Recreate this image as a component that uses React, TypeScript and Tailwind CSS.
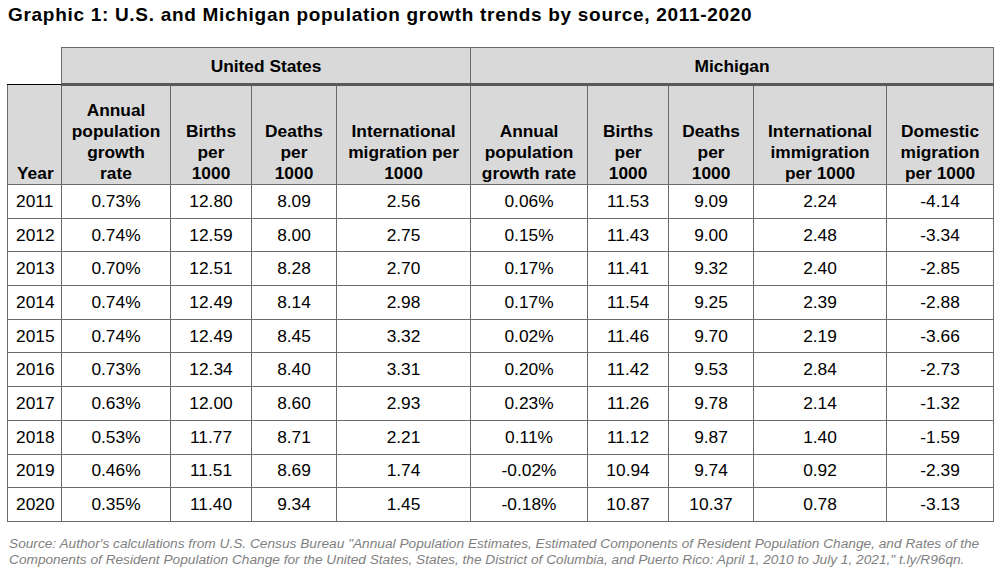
import React from "react";

const rows: string[][] = [
  ["2011", "0.73%", "12.80", "8.09", "2.56", "0.06%", "11.53", "9.09", "2.24", "-4.14"],
  ["2012", "0.74%", "12.59", "8.00", "2.75", "0.15%", "11.43", "9.00", "2.48", "-3.34"],
  ["2013", "0.70%", "12.51", "8.28", "2.70", "0.17%", "11.41", "9.32", "2.40", "-2.85"],
  ["2014", "0.74%", "12.49", "8.14", "2.98", "0.17%", "11.54", "9.25", "2.39", "-2.88"],
  ["2015", "0.74%", "12.49", "8.45", "3.32", "0.02%", "11.46", "9.70", "2.19", "-3.66"],
  ["2016", "0.73%", "12.34", "8.40", "3.31", "0.20%", "11.42", "9.53", "2.84", "-2.73"],
  ["2017", "0.63%", "12.00", "8.60", "2.93", "0.23%", "11.26", "9.78", "2.14", "-1.32"],
  ["2018", "0.53%", "11.77", "8.71", "2.21", "0.11%", "11.12", "9.87", "1.40", "-1.59"],
  ["2019", "0.46%", "11.51", "8.69", "1.74", "-0.02%", "10.94", "9.74", "0.92", "-2.39"],
  ["2020", "0.35%", "11.40", "9.34", "1.45", "-0.18%", "10.87", "10.37", "0.78", "-3.13"],
];

const widths = [54, 109, 81, 85, 134, 117, 81, 85, 133, 107];

const heads: string[][] = [
  ["Annual", "population", "growth", "rate"],
  ["Births", "per", "1000"],
  ["Deaths", "per", "1000"],
  ["International", "migration per", "1000"],
  ["Annual", "population", "growth rate"],
  ["Births", "per", "1000"],
  ["Deaths", "per", "1000"],
  ["International", "immigration", "per 1000"],
  ["Domestic", "migration", "per 1000"],
];

export default function App() {
  return (
    <div
      className="w-[1001px] h-[570px] bg-white text-black overflow-hidden"
      style={{ fontFamily: '"Liberation Sans", Arial, sans-serif' }}
    >
      <h1 className="pl-[8px] pt-[4px] text-[19px] leading-[21px] font-bold tracking-[0.7px] whitespace-nowrap">
        Graphic 1: U.S. and Michigan population growth trends by source, 2011-2020
      </h1>
      <div className="pl-[7px] pt-[22px]">
        <table className="w-[987px] border-collapse table-fixed text-[17.33px] leading-[21px]">
          <colgroup>
            {widths.map((w, i) => (
              <col key={i} style={{ width: w }} />
            ))}
          </colgroup>
          <thead>
            <tr className="h-[37px]">
              <th className="p-0 bg-white border-b border-b-black"></th>
              <th
                colSpan={4}
                className="p-0 pt-[1px] bg-[#d9d9d9] border border-[#6b6b6b] border-b-[3px] border-b-[#595959] font-bold text-center align-middle"
              >
                United States
              </th>
              <th
                colSpan={5}
                className="p-0 pt-[1px] bg-[#d9d9d9] border border-[#6b6b6b] border-b-[3px] border-b-[#595959] font-bold text-center align-middle"
              >
                Michigan
              </th>
            </tr>
            <tr className="h-[100px]">
              <th className="px-[9px] pb-0 bg-[#d9d9d9] border border-[#6b6b6b] border-t-black font-bold text-left align-bottom">
                Year
              </th>
              {heads.map((h, i) => (
                <th
                  key={i}
                  className="px-0 pb-0 bg-[#d9d9d9] border border-[#6b6b6b] font-bold text-center align-bottom whitespace-nowrap"
                >
                  {h.map((line, j) => (
                    <div key={j}>{line}</div>
                  ))}
                </th>
              ))}
            </tr>
          </thead>
          <tbody>
            {rows.map((r, i) => (
              <tr key={i} className="h-[33.7px]">
                {r.map((c, j) => (
                  <td
                    key={j}
                    className={
                      "p-0 border border-[#6b6b6b] align-middle font-normal " +
                      (j === 0 ? "text-left pl-[8px]" : "text-center")
                    }
                  >
                    {c}
                  </td>
                ))}
              </tr>
            ))}
          </tbody>
        </table>
      </div>
      <p className="pl-[9px] pt-[14px] text-[13.7px] leading-[16px] italic text-[#7f7f7f] whitespace-nowrap">
        Source: Author's calculations from U.S. Census Bureau "Annual Population Estimates, Estimated Components of Resident Population Change, and Rates of the
        <br />
        Components of Resident Population Change for the United States, States, the District of Columbia, and Puerto Rico: April 1, 2010 to July 1, 2021," t.ly/R96qn.
      </p>
    </div>
  );
}
